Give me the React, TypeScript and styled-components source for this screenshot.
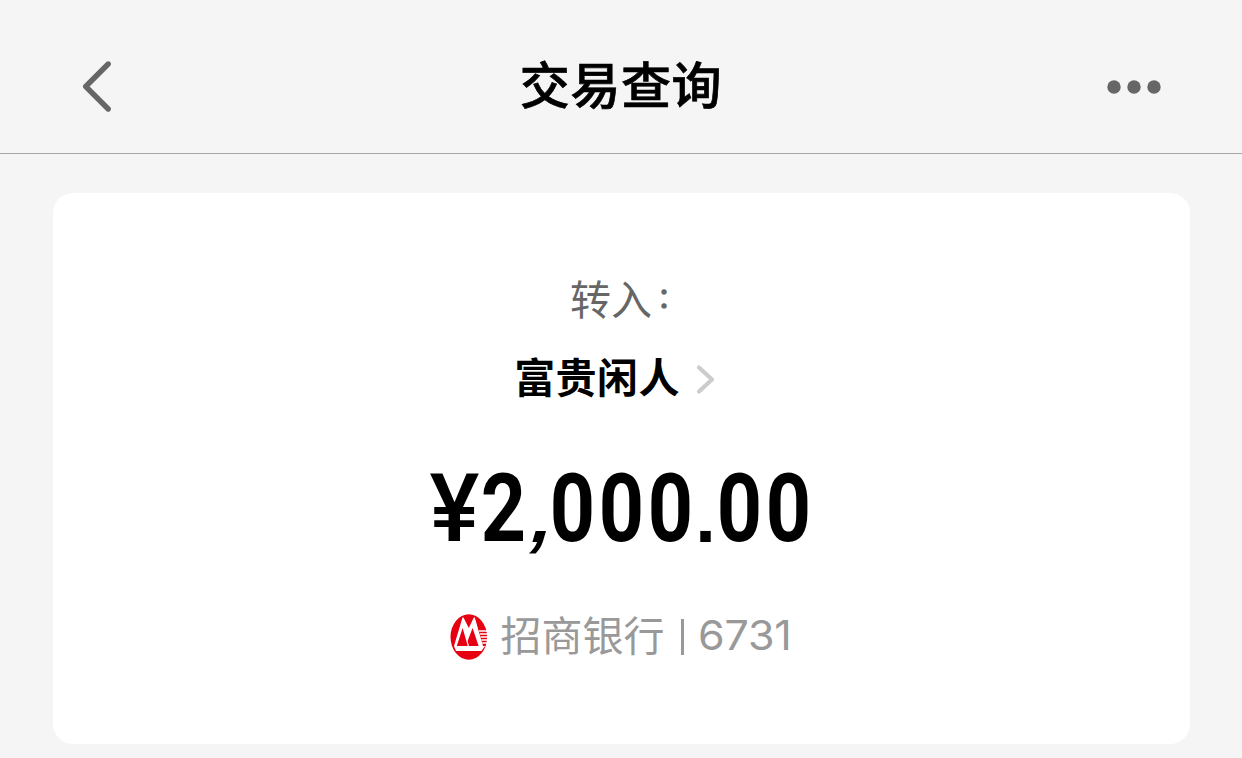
import styled, { createGlobalStyle } from 'styled-components';

const GlobalStyle = createGlobalStyle`
    body {
        margin: 0;
        background: #f5f5f5;
        font-family: 'Noto Sans CJK SC', sans-serif;
        overflow: hidden;
    }
`;

const Page = styled.div`
    width: 1242px;
    height: 758px;
    box-sizing: border-box;
    background: #f5f5f5;
`;

const NavBar = styled.header`
    display: grid;
    grid-template-columns: 200px 1fr 200px;
    align-items: center;
    height: 154px;
    padding: 20px 80px 0;
    box-sizing: border-box;
    border-bottom: 1px solid #a6a6a6;
`;

const Title = styled.h1`
    margin: 0;
    padding-bottom: 10px;
    font-size: 50px;
    font-weight: 500;
    line-height: 60px;
    letter-spacing: 0.6px;
    text-align: center;
    color: #000;
    -webkit-text-stroke: 0.7px #000;
`;

const IconButton = styled.button<{ $align: 'start' | 'end' }>`
    display: flex;
    justify-self: ${(p) => p.$align};
    padding: 0;
    border: none;
    background: none;
`;

const Card = styled.main`
    display: flex;
    flex-direction: column;
    align-items: center;
    width: 1137px;
    height: 551px;
    margin: 39px 0 0 53px;
    padding-top: 74px;
    box-sizing: border-box;
    border-radius: 20px;
    background: #fff;
`;

const Label = styled.div`
    display: flex;
    height: 60px;
    padding-left: 20px;
    line-height: 60px;
    font-size: 41px;
    color: #666;
`;

const Colon = styled.span`
    width: 36px;
    padding-left: 5px;
    font-size: 28px;
    line-height: 58px;
    -webkit-text-stroke: 1px #666;
`;

const Payee = styled.div`
    display: flex;
    align-items: center;
    gap: 15px;
    height: 60px;
    margin-top: 18px;
    margin-right: 12px;
    font-size: 41px;
    font-weight: 700;
    line-height: 60px;
    letter-spacing: 0.4px;
    color: #000;

    svg {
        margin-top: 9px;
    }
`;

const Amount = styled.div`
    display: flex;
    height: 100px;
    margin-top: 54px;
    font-family: Roboto, sans-serif;
    font-size: 94px;
    font-weight: 700;
    line-height: 100px;
    color: #000;
`;

const Glyph = styled.span`
    display: flex;
    justify-content: center;
    width: 49px;
    margin: 0 1px 0 -1px;
    transform: scaleX(0.84);
`;

const Currency = styled(Glyph)`
    width: 50px;
    margin: 0;
    font-weight: 500;
    transform: scaleX(1);
`;

const Point = styled.span`
    display: flex;
    justify-content: center;
    width: 20px;
    padding-top: 8px;
    font-family: 'Liberation Sans', sans-serif;
    font-size: 74px;
`;

const Comma = styled(Point)`
    transform: translateX(8px) skewX(-16deg);
`;

const Bank = styled.div`
    display: flex;
    align-items: center;
    height: 60px;
    margin: 48px 0 0 1px;
    font-size: 41px;
    line-height: 60px;
    color: #999;
`;

const BankName = styled.span`
    margin: -8px 0 0 12px;
`;

const Divider = styled.span`
    width: 3px;
    height: 36px;
    margin: 0 14px 0 17px;
    background: #999;
`;

const CardTail = styled.span`
    margin-top: -5px;
    padding-right: 6px;
    font-family: Inter, sans-serif;
    font-size: 41px;
    letter-spacing: -0.2px;
    transform: scaleX(1.05);
    transform-origin: left;
`;

const BackIcon = () => (
    <svg width="36" height="56" viewBox="0 0 36 56" fill="none" stroke="#666" strokeWidth="5.4" strokeLinecap="round" strokeLinejoin="round">
        <path d="M28.2 5 L5.7 27.5 L28.2 50" />
    </svg>
);

const MoreIcon = () => (
    <svg width="56" height="16" viewBox="0 0 56 16" fill="#666">
        <circle cx="8" cy="8" r="6.7" />
        <circle cx="28" cy="8" r="6.7" />
        <circle cx="48" cy="8" r="6.7" />
    </svg>
);

const ChevronIcon = () => (
    <svg width="22" height="32" viewBox="0 0 22 32" fill="none" stroke="#ccc" strokeWidth="4.2" strokeLinecap="round" strokeLinejoin="round">
        <path d="M4 3.5 L17 15.5 L4 27.5" />
    </svg>
);

const BankLogo = () => (
    <svg width="38" height="46" viewBox="0 0 38 46">
        <ellipse cx="18.8" cy="23" rx="18.3" ry="22.7" fill="#e60012" />
        <path d="M4 32 L12.5 3.5 H13.5 L18.8 14 L23.8 3.5 H24.8 L33 32 H35 L31.5 37 H6 Z" fill="#fff" />
        <path d="M6.8 32 L12.6 14 L17.8 32 Z M19 32 L17.6 27 L22.6 14 L28.6 32 Z" fill="#e60012" />
        <path d="M29 17 H38 M29.8 20 H38 M30.6 23 H38 M31.4 26 H38 M32.2 29 H38" stroke="#fff" strokeWidth="1.3" />
    </svg>
);

const AMOUNT = '¥2,000.00';

const GLYPHS: Record<string, typeof Glyph> = {
    '¥': Currency,
    ',': Comma,
    '.': Point,
};

function App() {
    return (
        <Page>
            <GlobalStyle />
            <NavBar>
                <IconButton $align="start" aria-label="返回">
                    <BackIcon />
                </IconButton>
                <Title>交易查询</Title>
                <IconButton $align="end" aria-label="更多">
                    <MoreIcon />
                </IconButton>
            </NavBar>
            <Card>
                <Label>
                    转入<Colon>：</Colon>
                </Label>
                <Payee>
                    <span>富贵闲人</span>
                    <ChevronIcon />
                </Payee>
                <Amount>
                    {AMOUNT.split('').map((char, i) => {
                        const Part = GLYPHS[char] || Glyph;
                        return <Part key={i}>{char}</Part>;
                    })}
                </Amount>
                <Bank>
                    <BankLogo />
                    <BankName>招商银行</BankName>
                    <Divider />
                    <CardTail>6731</CardTail>
                </Bank>
            </Card>
        </Page>
    );
}

export default App;
